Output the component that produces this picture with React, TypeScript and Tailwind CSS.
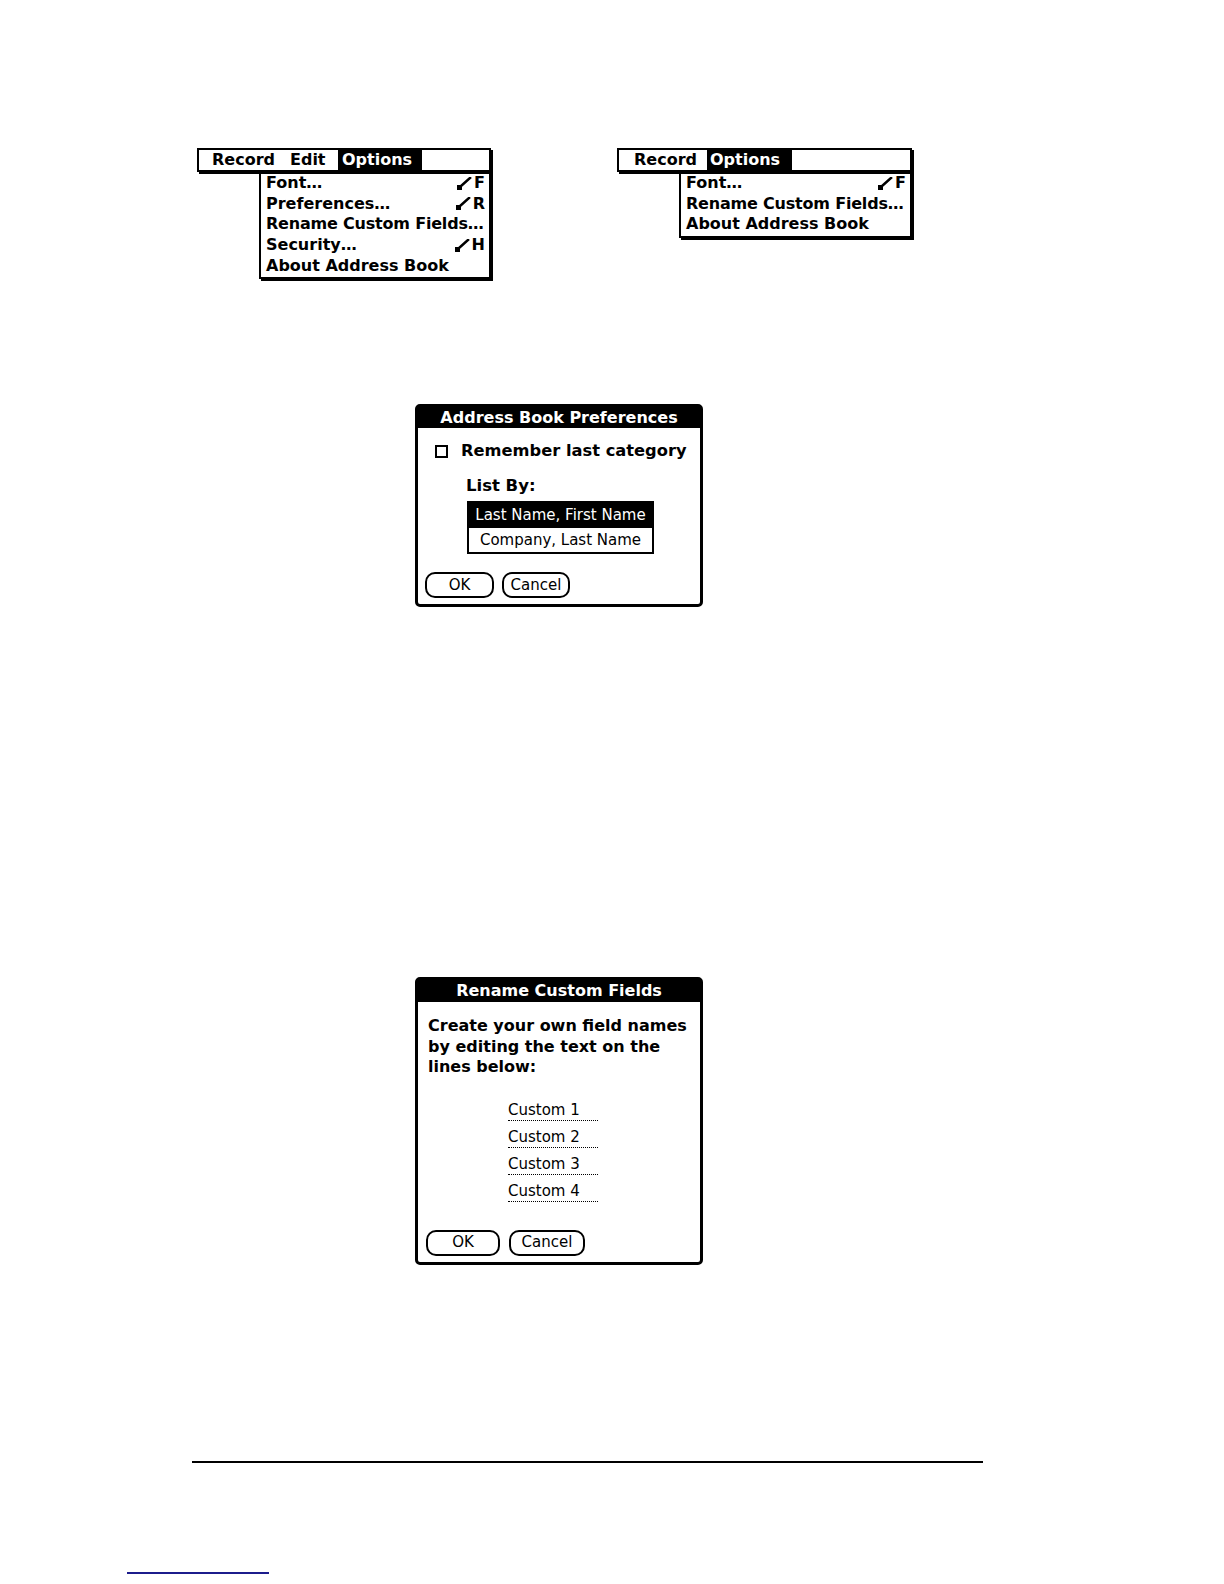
import React from "react";

const bold = "font-['DejaVu_Sans',sans-serif] font-bold";
const reg = "font-['DejaVu_Sans',sans-serif]";

function Stroke() {
  return (
    <svg width="15" height="13" viewBox="0 0 15 13" className="inline-block">
      <rect x="0" y="8" width="5" height="5" fill="#000" />
      <path d="M3 10 L13 1" stroke="#000" strokeWidth="2.6" strokeLinecap="square" />
    </svg>
  );
}

function MenuItem({ label, sc, tight }: { label: string; sc?: string; tight?: boolean }) {
  return (
    <div className={`h-[20.6px] flex items-center justify-between whitespace-nowrap pl-[5px] pr-[4px] text-[16px] leading-none text-black ${bold}`}>
      <span className={tight ? "whitespace-nowrap tracking-[-0.2px]" : "whitespace-nowrap"}>{label}</span>
      {sc && (
        <span className="flex items-center gap-[2px]">
          <Stroke />
          <span>{sc}</span>
        </span>
      )}
    </div>
  );
}

function Menu1() {
  return (
    <div className="flex flex-col w-[296px]">
      <div className={`h-[24px] w-[294px] border-2 border-black shadow-[2px_2px_0_0_#000] flex items-stretch whitespace-nowrap text-[16px] leading-none ${bold}`}>
        <div className="w-[84px] pl-[13px] flex items-center">Record</div>
        <div className="w-[55px] pl-[7px] flex items-center">Edit</div>
        <div className="w-[84px] pl-[4px] flex items-center bg-black text-white">Options</div>
      </div>
      <div className="ml-[62px] w-[232px] border-2 border-t-0 border-black shadow-[2px_2px_0_0_#000] pt-[1px] pb-[1px]">
        <MenuItem label="Font…" sc="F" />
        <MenuItem label="Preferences…" sc="R" />
        <MenuItem label="Rename Custom Fields…" tight />
        <MenuItem label="Security…" sc="H" />
        <MenuItem label="About Address Book" />
      </div>
    </div>
  );
}

function Menu2() {
  return (
    <div className="flex flex-col w-[297px]">
      <div className={`h-[24px] w-[295px] border-2 border-black shadow-[2px_2px_0_0_#000] flex items-stretch whitespace-nowrap text-[16px] leading-none ${bold}`}>
        <div className="w-[88px] pl-[15px] flex items-center">Record</div>
        <div className="w-[85px] pl-[3px] flex items-center bg-black text-white">Options</div>
      </div>
      <div className="ml-[62px] w-[233px] border-2 border-t-0 border-black shadow-[2px_2px_0_0_#000] pt-[1px] pb-[1px]">
        <MenuItem label="Font…" sc="F" />
        <MenuItem label="Rename Custom Fields…" tight />
        <MenuItem label="About Address Book" />
      </div>
    </div>
  );
}

function Button({ label, w }: { label: string; w: string }) {
  return (
    <div className={`${w} h-[26px] border-2 border-black rounded-[10px] flex items-center justify-center text-[15px] leading-none ${reg}`}>
      {label}
    </div>
  );
}

function Dialog1() {
  return (
    <div className="w-[288px] h-[203px] border-[3px] border-black rounded-[5px] flex flex-col bg-white">
      <div className={`h-[21px] bg-black text-white flex items-center justify-center whitespace-nowrap text-[16px] leading-none ${bold}`}>
        Address Book Preferences
      </div>
      <div className="flex items-center mt-[13px] ml-[17px] h-[20px]">
        <div className="w-[13px] h-[13px] border-2 border-black" />
        <span className={`ml-[13px] whitespace-nowrap text-[16.3px] leading-none ${bold}`}>Remember last category</span>
      </div>
      <div className={`ml-[48px] mt-[15px] h-[20px] flex items-center text-[16.5px] leading-none ${bold}`}>List By:</div>
      <div className={`ml-[49px] mt-[5px] w-[187px] h-[53px] border-2 border-black flex flex-col whitespace-nowrap text-[15px] leading-none ${reg}`}>
        <div className="h-[25px] bg-black text-white flex items-center justify-center">Last Name, First Name</div>
        <div className="flex-1 flex items-center justify-center">Company, Last Name</div>
      </div>
      <div className="flex ml-[7px] mt-[18px] gap-[8px]">
        <Button label="OK" w="w-[69px]" />
        <Button label="Cancel" w="w-[68px]" />
      </div>
    </div>
  );
}

function CustomField({ label }: { label: string }) {
  return (
    <div className="h-[27.3px] flex items-start">
      <div className={`w-[90px] h-[21px] border-b-[1.5px] border-dotted border-black whitespace-nowrap text-[15px] leading-[21px] ${reg}`}>
        {label}
      </div>
    </div>
  );
}

function Dialog2() {
  return (
    <div className="w-[288px] h-[288px] border-[3px] border-black rounded-[5px] flex flex-col bg-white">
      <div className={`h-[22px] bg-black text-white flex items-center justify-center whitespace-nowrap text-[16px] leading-none ${bold}`}>
        Rename Custom Fields
      </div>
      <div className={`ml-[10px] mt-[14px] whitespace-nowrap text-[16px] leading-[20.5px] ${bold}`}>
        <div>Create your own field names</div>
        <div>by editing the text on the</div>
        <div>lines below:</div>
      </div>
      <div className="ml-[90px] mt-[22px] flex flex-col">
        <CustomField label="Custom 1" />
        <CustomField label="Custom 2" />
        <CustomField label="Custom 3" />
        <CustomField label="Custom 4" />
      </div>
      <div className="flex ml-[8px] mt-[21px] gap-[9px]">
        <Button label="OK" w="w-[74px]" />
        <Button label="Cancel" w="w-[76px]" />
      </div>
    </div>
  );
}

export default function App() {
  return (
    <div className="w-[1224px] h-[1584px] bg-white text-black flex flex-col overflow-hidden">
      <div className="mt-[148px] h-[128px] flex items-start">
        <div className="ml-[197px]">
          <Menu1 />
        </div>
        <div className="ml-[124px]">
          <Menu2 />
        </div>
      </div>
      <div className="mt-[128px] ml-[415px]">
        <Dialog1 />
      </div>
      <div className="mt-[370px] ml-[415px]">
        <Dialog2 />
      </div>
      <div className="mt-[196px] ml-[192px] w-[791px] h-[2px] bg-black" />
      <div className="mt-[109px] ml-[127px] w-[142px] h-[2px] bg-[#1c1c8c]" />
    </div>
  );
}
